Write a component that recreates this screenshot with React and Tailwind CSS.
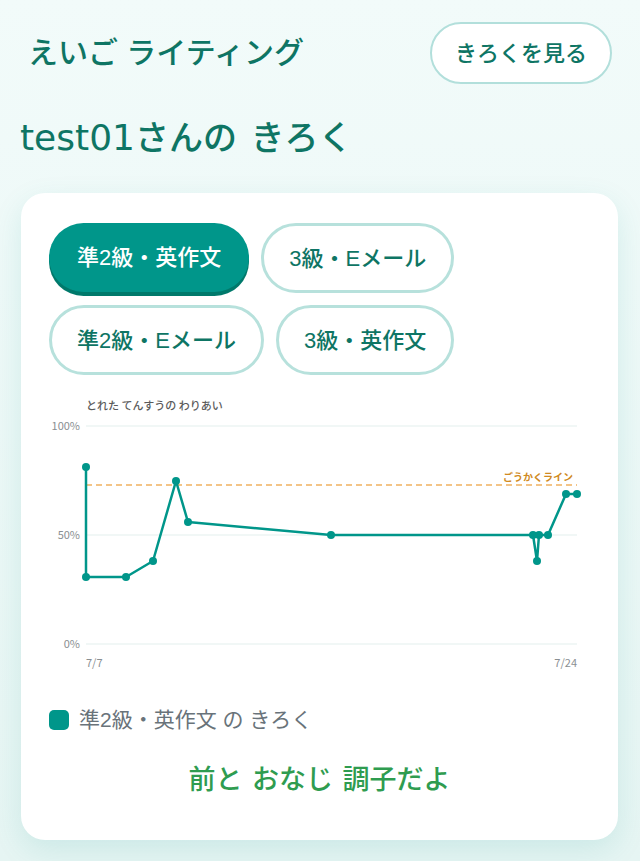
import React from "react";

const TABS = [
  { label: "準2級・英作文", active: true },
  { label: "3級・Eメール" },
  { label: "準2級・Eメール" },
  { label: "3級・英作文" },
];

// page-coordinate points (x, y) of the record line
const POINTS = [
  [86, 467], [86, 577], [126, 577], [153, 561], [176, 481], [188, 522],
  [331, 535], [533, 535], [537, 561], [539, 535], [548, 535], [566, 494], [577, 494],
];

function Chart() {
  const line = POINTS.map((p) => p.join(",")).join(" ");
  return (
    <svg
      width="541"
      height="290"
      viewBox="49 390 541 290"
      className="block"
      style={{ fontFamily: "'Noto Sans CJK JP', 'Liberation Sans', sans-serif" }}
    >
      <text x="86" y="410" fontSize="11" fill="#5b5b5b" fontWeight="500">
        とれた てんすうの わりあい
      </text>
      {[
        [426, "100%"],
        [535, "50%"],
        [644, "0%"],
      ].map(([y, t]) => (
        <g key={t}>
          <line x1="86" x2="577" y1={y} y2={y} stroke="#ecf4f3" strokeWidth="1.5" />
          <text x="80" y={y + 4} fontSize="11" fill="#8a8f92" textAnchor="end">
            {t}
          </text>
        </g>
      ))}
      <line x1="86" x2="577" y1="485" y2="485" stroke="#f0b160" strokeWidth="1.6" strokeDasharray="6 4" />
      <text x="573" y="481" fontSize="10" fill="#d08a22" fontWeight="700" textAnchor="end">
        ごうかくライン
      </text>
      <text x="86" y="667" fontSize="11" fill="#8a8f92">7/7</text>
      <text x="577" y="667" fontSize="11" fill="#8a8f92" textAnchor="end">7/24</text>
      <polyline points={line} fill="none" stroke="#00968a" strokeWidth="2.5" strokeLinejoin="round" />
      {POINTS.map(([x, y], i) => (
        <circle key={i} cx={x} cy={y} r="4" fill="#00968a" />
      ))}
    </svg>
  );
}

export default function App() {
  return (
    <div className="min-h-screen bg-gradient-to-b from-[#f2fbfa] to-[#e6f5f3] px-5 pt-[22px] pb-5 font-['Liberation_Sans','Noto_Sans_CJK_JP',sans-serif]">
      <header className="flex h-[62px] items-center justify-between pl-2 pr-2">
        <h1 className="text-[30px] font-medium leading-none text-[#0e7564]">えいご ライティング</h1>
        <button
          type="button"
          className="h-[62px] rounded-full border-2 border-[#b2dfdb] bg-white px-[23px] text-[22px] font-medium text-[#0e7564]"
        >
          きろくを見る
        </button>
      </header>

      <h2 className="mt-[34px] flex items-baseline text-[#0e7564] [word-spacing:4px]">
        <span className="font-['DejaVu_Sans',sans-serif] text-[36px] leading-[40px]">test01</span>
        <span className="text-[34px] font-medium leading-[40px]">さんの きろく</span>
      </h2>

      <section className="mt-[35px] ml-px mr-[2px] rounded-[24px] bg-white px-7 pt-[30px] pb-[42px] shadow-[0_10px_30px_rgba(0,150,136,0.12)]">
        <div className="flex flex-wrap gap-3">
          {TABS.map((t) =>
            t.active ? (
              <button
                key={t.label}
                type="button"
                className="h-[69px] rounded-full bg-[#00968a] px-7 text-[22px] font-medium text-white shadow-[0_4px_0_#00796b]"
              >
                {t.label}
              </button>
            ) : (
              <button
                key={t.label}
                type="button"
                className="h-[70px] rounded-full border-[3px] border-[#b7e1dc] bg-white px-[25px] text-[22px] font-medium text-[#0e7564]"
              >
                {t.label}
              </button>
            )
          )}
        </div>

        <div className="mt-[15px]">
          <Chart />
        </div>

        <div className="mt-[29px] flex items-center gap-[10px]">
          <span className="size-5 rounded-[5px] bg-[#00968a]" />
          <span className="text-[21px] leading-[22px] text-[#69737a]">準2級・英作文 の きろく</span>
        </div>

        <p className="mt-[31px] text-center text-[27px] font-medium leading-9 text-[#2f9c50] [word-spacing:2px]">前と おなじ 調子だよ</p>
      </section>
    </div>
  );
}
